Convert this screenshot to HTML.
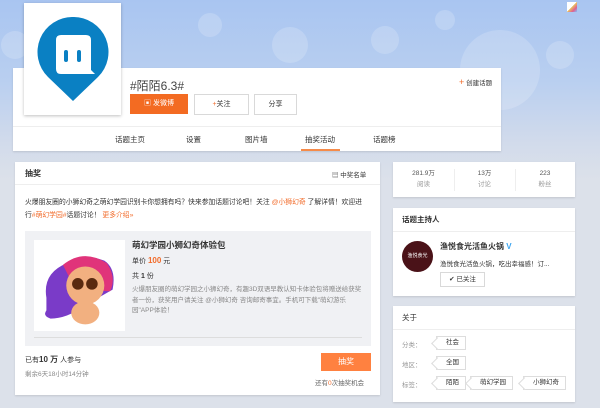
<!DOCTYPE html>
<html><head><meta charset="utf-8"><style>
*{margin:0;padding:0;box-sizing:border-box}
body{width:600px;height:408px;overflow:hidden;background:#dce1ea;font-family:"Liberation Sans","Noto Sans CJK SC",sans-serif;font-size:7px;color:#333;position:relative}
.a{position:absolute}
.banner{left:0;top:0;width:600px;height:180px;background:linear-gradient(180deg,#a9c5f1 0%,#b9cff0 45%,#d2dbeb 80%,#dce1ea 100%)}
.card{background:#fff;box-shadow:0 1px 2px rgba(0,0,0,.12)}
.btn{border:1px solid #d9d9d9;background:#fff;text-align:center;line-height:19px;font-size:7px;color:#333}
.or{color:#f26b2a}
.tag{border:1px solid #ddd;height:14px;line-height:12px;padding:0 6px 0 9px;font-size:6.5px;color:#333;background:#fff}
.tag:before{content:"";position:absolute;left:-4px;top:2px;width:8px;height:8px;border-left:1px solid #ddd;border-bottom:1px solid #ddd;background:#fff;transform:rotate(45deg)}
</style></head><body>
<div class="a banner"></div>
<svg class="a" style="left:0;top:0" width="600" height="160" opacity="0.18">
<g fill="#ffffff"><circle cx="15" cy="45" r="14"/><circle cx="290" cy="45" r="18"/><circle cx="385" cy="40" r="14"/><circle cx="500" cy="70" r="40"/><circle cx="445" cy="20" r="10"/><circle cx="560" cy="55" r="14"/><circle cx="210" cy="25" r="12"/></g></svg>
<div class="a" style="left:567px;top:2px;width:10px;height:10px;background:linear-gradient(135deg,#fff 50%,#e8c060 50%,#e06090 75%,#80c0ff)"></div>
<div class="a card" style="left:13px;top:68px;width:488px;height:83px"></div>
<div class="a" style="left:13px;top:126px;width:488px;height:1px;background:#eee"></div>
<div class="a card" style="left:24px;top:3px;width:97px;height:112px;box-shadow:0 1px 3px rgba(0,0,0,.25)"></div>
<svg class="a" style="left:37px;top:17px" width="74" height="86" viewBox="0 0 74 86">
<path d="M36 0 A35 35 0 0 1 61 60 L36 84 L11 60 A35 35 0 0 1 36 0Z" fill="#0a80c3"/>
<path d="M19 23 Q19 18 24 18 H49 Q54 18 54 23 V53 L58 57 H24 Q19 57 19 52Z" fill="#fff"/>
<rect x="27" y="33" width="4" height="12" rx="2" fill="#0a80c3"/><rect x="40" y="33" width="4" height="12" rx="2" fill="#0a80c3"/>
</svg>
<div class="a" style="left:130px;top:77px;font-size:12px;color:#444">#陌陌6.3#</div>
<div class="a" style="left:130px;top:94px;width:58px;height:20px;background:#f36b22;color:#fff;text-align:center;line-height:20px;font-size:7px">▣ 发微博</div>
<div class="a btn" style="left:194px;top:94px;width:55px;height:21px"><span class="or">+</span>关注</div>
<div class="a btn" style="left:254px;top:94px;width:43px;height:21px">分享</div>
<div class="a" style="left:459px;top:77px;font-size:6.5px"><span class="or" style="font-size:9px">+</span> 创建话题</div>
<div class="a" style="left:115px;top:134px;font-size:7.5px">话题主页</div>
<div class="a" style="left:186px;top:134px;font-size:7.5px">设置</div>
<div class="a" style="left:245px;top:134px;font-size:7.5px">图片墙</div>
<div class="a" style="left:305px;top:134px;font-size:7.5px">抽奖活动</div>
<div class="a" style="left:301px;top:149px;width:39px;height:2px;background:#f58b4a"></div>
<div class="a" style="left:373px;top:134px;font-size:7.5px">话题榜</div>

<div class="a card" style="left:15px;top:162px;width:365px;height:233px"></div>
<div class="a" style="left:25px;top:168px;font-size:8px;font-weight:bold">抽奖</div>
<div class="a" style="left:332px;top:169px;font-size:6.5px">▤ 中奖名单</div>
<div class="a" style="left:15px;top:184px;width:365px;height:1px;background:#eee"></div>
<div class="a" style="left:25px;top:196px;width:338px;font-size:6.8px;line-height:13px">火爆朋友圈的小狮幻奇之萌幻学园识别卡你想拥有吗？快来参加话题讨论吧！关注 <span class="or">@小狮幻奇</span> 了解详情！欢迎进行<span class="or">#萌幻学园#</span>话题讨论！ <span class="or">更多介绍»</span></div>
<div class="a" style="left:25px;top:231px;width:346px;height:115px;background:#f0f1f4"></div>
<div class="a" style="left:34px;top:240px;width:91px;height:91px;background:#fff"></div>
<svg class="a" style="left:34px;top:240px" width="91" height="91" viewBox="0 0 110 110">
<path d="M15 70 Q10 40 40 28 Q60 15 85 25 Q100 35 95 60 L60 80 Q40 95 20 95 Q10 92 15 85Z" fill="#7a3bc8"/>
<path d="M35 30 Q60 10 88 28 Q100 45 92 62 L50 60Z" fill="#e0347a"/>
<circle cx="62" cy="55" r="23" fill="#f2b080"/>
<circle cx="53" cy="53" r="7" fill="#5a2a10"/><circle cx="70" cy="53" r="7" fill="#5a2a10"/>
<ellipse cx="62" cy="88" rx="17" ry="14" fill="#f2b080"/>
</svg>
<div class="a" style="left:132px;top:239px;font-size:8.5px;font-weight:bold">萌幻学园小狮幻奇体验包</div>
<div class="a" style="left:132px;top:256px;font-size:7px">单价 <b class="or" style="font-size:8px">100</b> 元</div>
<div class="a" style="left:132px;top:271px;font-size:7px">共 <b>1</b> 份</div>
<div class="a" style="left:132px;top:285px;width:232px;font-size:6.5px;line-height:10.5px;color:#888">火爆朋友圈的萌幻学园之小狮幻奇，有趣3D双语早教认知卡体验包将赠送给获奖者一份，获奖用户请关注 @小狮幻奇 咨询邮寄事宜。手机可下载"萌幻游乐园"APP体验！</div>
<div class="a" style="left:34px;top:337px;width:328px;height:1px;background:#ddd"></div>
<div class="a" style="left:25px;top:354px;font-size:7px">已有<b style="font-size:8px">10 万</b> 人参与</div>
<div class="a" style="left:25px;top:368px;font-size:6.5px;color:#888">剩余6天18小时14分钟</div>
<div class="a" style="left:321px;top:353px;width:50px;height:18px;background:#ff8140;color:#fff;text-align:center;line-height:18px;font-size:8px">抽奖</div>
<div class="a" style="left:315px;top:377px;font-size:6.5px;color:#666">还有<span class="or">0</span>次抽奖机会</div>

<div class="a card" style="left:393px;top:162px;width:182px;height:35px"></div>
<div class="a" style="left:393px;top:168px;width:61px;text-align:center;font-size:6.5px;line-height:11px;color:#555">281.9万<br><span style="color:#999">阅读</span></div>
<div class="a" style="left:454px;top:168px;width:61px;text-align:center;font-size:6.5px;line-height:11px;color:#555">13万<br><span style="color:#999">讨论</span></div>
<div class="a" style="left:515px;top:168px;width:60px;text-align:center;font-size:6.5px;line-height:11px;color:#555">223<br><span style="color:#999">粉丝</span></div>
<div class="a" style="left:454px;top:169px;width:1px;height:22px;background:#eee"></div>
<div class="a" style="left:515px;top:169px;width:1px;height:22px;background:#eee"></div>

<div class="a card" style="left:393px;top:208px;width:182px;height:88px"></div>
<div class="a" style="left:402px;top:214px;font-size:7.5px;font-weight:bold">话题主持人</div>
<div class="a" style="left:393px;top:231px;width:182px;height:1px;background:#eee"></div>
<div class="a" style="left:402px;top:241px;width:31px;height:31px;border-radius:50%;background:#4a1218;color:#fff;font-size:5px;text-align:center;line-height:31px">渔悦食光</div>
<div class="a" style="left:440px;top:241px;font-size:8px;font-weight:bold">渔悦食光活鱼火锅 <span style="color:#3da5f0">V</span></div>
<div class="a" style="left:440px;top:258px;font-size:6.5px">渔悦食光活鱼火锅，吃出幸福感！订...</div>
<div class="a btn" style="left:440px;top:272px;width:45px;height:15px;line-height:13px;font-size:6.5px">✔ 已关注</div>

<div class="a card" style="left:393px;top:306px;width:182px;height:96px"></div>
<div class="a" style="left:402px;top:312px;font-size:7.5px">关于</div>
<div class="a" style="left:393px;top:329px;width:182px;height:1px;background:#eee"></div>
<div class="a" style="left:402px;top:339px;font-size:6.5px;color:#999">分类：</div>
<div class="a tag" style="left:436px;top:336px">社会</div>
<div class="a" style="left:402px;top:359px;font-size:6.5px;color:#999">地区：</div>
<div class="a tag" style="left:436px;top:356px">全国</div>
<div class="a" style="left:402px;top:379px;font-size:6.5px;color:#999">标签：</div>
<div class="a tag" style="left:436px;top:376px">陌陌</div>
<div class="a tag" style="left:470px;top:376px">萌幻学园</div>
<div class="a tag" style="left:523px;top:376px">小狮幻奇</div>
</body></html>
